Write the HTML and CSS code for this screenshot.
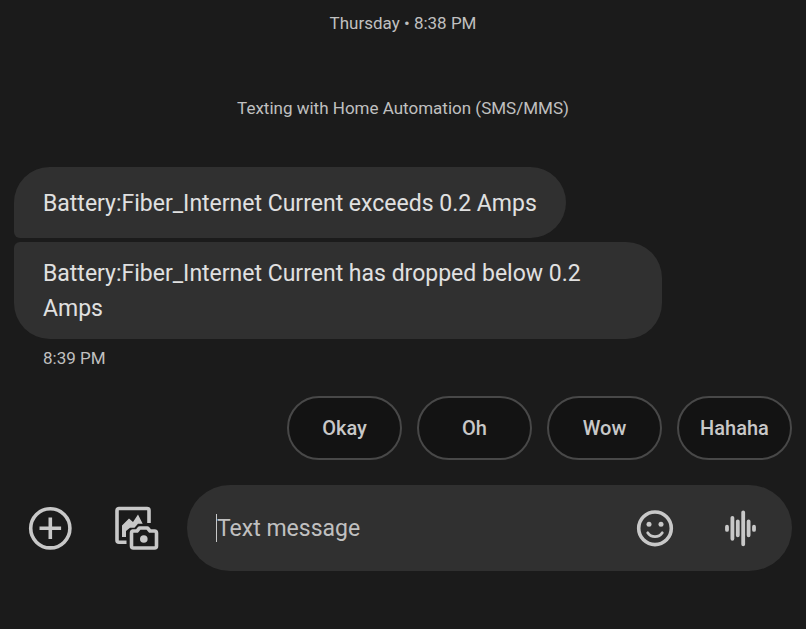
FILE: index.html
```html
<!DOCTYPE html>
<html lang="en">
<head>
<meta charset="utf-8">
<meta name="viewport" content="width=device-width, initial-scale=1">
<title>Home Automation</title>
<link rel="stylesheet" href="styles.css">
</head>
<body>
<main class="conversation">
  <p class="note date">Thursday • 8:38 PM</p>
  <p class="note">Texting with Home Automation (SMS/MMS)</p>

  <section class="messages">
    <p class="bubble first">Battery:Fiber_Internet Current exceeds 0.2 Amps</p>
    <p class="bubble last">Battery:Fiber_Internet Current has dropped below 0.2 Amps</p>
    <time class="time">8:39 PM</time>
  </section>

  <div class="replies">
    <button type="button" class="chip">Okay</button>
    <button type="button" class="chip">Oh</button>
    <button type="button" class="chip">Wow</button>
    <button type="button" class="chip">Hahaha</button>
  </div>

  <form class="composer">
    <button type="button" class="icon-button" aria-label="Add">
      <svg width="44" height="44" viewBox="0 0 44 44" fill="none" stroke="currentColor" stroke-width="3.6">
        <circle cx="22.3" cy="22.3" r="19.6"/>
        <path d="M22.300 11.500v21.600M11.500 22.300h21.600"/>
      </svg>
    </button>
    <button type="button" class="icon-button" aria-label="Gallery and camera">
      <svg width="44" height="44" viewBox="0 0 44 44" fill="none" stroke="currentColor" stroke-width="3.6" stroke-linejoin="round">
        <path d="M11.500 36.300H4A2 2 0 0 1 2 34.300V4.500A2 2 0 0 1 4 2.500h28a2 2 0 0 1 2 2v12.500"/>
        <path d="M7 31V19.500l7-7 4 3.500 5-7.500 4.700 9.200h-4.700l-3.500 4h-4.500l-4 3.300V31z" fill="currentColor" stroke="none"/>
        <path d="M18 25h4l2.500-3h8l2.500 3h4.500a2 2 0 0 1 2 2V40a2 2 0 0 1-2 2H18.500a2 2 0 0 1-2-2V27a2 2 0 0 1 1.500-2z"/>
        <circle cx="28.800" cy="33" r="3.800" fill="currentColor" stroke="none"/>
      </svg>
    </button>
    <div class="field">
      <span class="caret"></span>
      <input class="input" type="text" placeholder="Text message" aria-label="Text message">
      <button type="button" class="icon-button" aria-label="Emoji">
        <svg width="44" height="44" viewBox="0 0 44 44" fill="none" stroke="currentColor" stroke-width="3.6">
          <circle cx="22" cy="22.3" r="16.300"/>
          <circle cx="16" cy="18.3" r="2.500" fill="currentColor" stroke="none"/>
          <circle cx="28" cy="18.3" r="2.500" fill="currentColor" stroke="none"/>
          <path d="M14.700 26.800c3.500 5.200 11.100 5.200 14.600 0" stroke-width="2.800" stroke-linecap="round"/>
        </svg>
      </button>
      <button type="button" class="icon-button" aria-label="Record voice message">
        <svg width="44" height="44" viewBox="0 0 44 44" fill="none" stroke="currentColor" stroke-width="3.800" stroke-linecap="round">
          <path d="M9 20.700v3.200M14.400 11.800v21M19.800 15.300v14M25.200 6.300v32M30.600 15.300v14M36 20.700v3.200"/>
        </svg>
      </button>
    </div>
  </form>
</main>
</body>
</html>
```
FILE: styles.css
```css
* {
  box-sizing: border-box;
}

body {
  margin: 0;
  background: #1b1b1b;
  color: #e0e0e0;
  font-family: "Google Sans", Roboto, "Liberation Sans", sans-serif;
}

.conversation {
  display: flex;
  flex-direction: column;
  padding: 11px 14px 56px;
}

.note,
.time {
  margin: 0;
  color: #c0c0c0;
  font-size: 17px;
  line-height: 24px;
}

.note {
  text-align: center;
}

.date {
  margin-bottom: 61px;
}

.messages {
  display: flex;
  flex-direction: column;
  align-items: flex-start;
  gap: 4px;
  margin-top: 47px;
}

.bubble {
  max-width: 648px;
  margin: 0;
  padding: 14px 29px 13px;
  background: #303030;
  font-size: 23px;
  line-height: 35px;
}

.first {
  padding-block: 19px 17px;
  border-radius: 36px 36px 36px 6px;
}

.last {
  border-radius: 6px 36px 36px 36px;
}

.time {
  margin: 3px 29px 0;
}

.replies {
  display: flex;
  justify-content: flex-end;
  gap: 15px;
  margin-top: 26px;
}

.chip {
  min-width: 115px;
  height: 64px;
  padding: 0 20px;
  border: 2px solid #484848;
  border-radius: 32px;
  background: #131313;
  color: #c8c8c8;
  font: inherit;
  font-size: 20px;
  font-weight: 500;
}

.composer {
  display: flex;
  align-items: center;
  margin-top: 25px;
  padding-left: 14px;
  gap: 43px;
}

.icon-button {
  flex: none;
  width: 44px;
  height: 44px;
  padding: 0;
  border: 0;
  background: none;
  color: #c8c8c8;
}

.icon-button svg {
  display: block;
}

.field {
  display: flex;
  flex: 1;
  align-items: center;
  min-width: 0;
  height: 86px;
  margin-left: -15px;
  padding: 0 30px 0 29px;
  border-radius: 43px;
  background: #303030;
}

.field .icon-button + .icon-button {
  margin-left: 41px;
}

.caret {
  width: 1px;
  height: 28px;
  background: #c8c8c8;
}

.input {
  flex: 1;
  min-width: 0;
  padding: 0;
  border: 0;
  outline: 0;
  background: none;
  color: #e0e0e0;
  font: inherit;
  font-size: 23px;
}

.input::placeholder {
  color: #c0c0c0;
  opacity: 1;
}
```
